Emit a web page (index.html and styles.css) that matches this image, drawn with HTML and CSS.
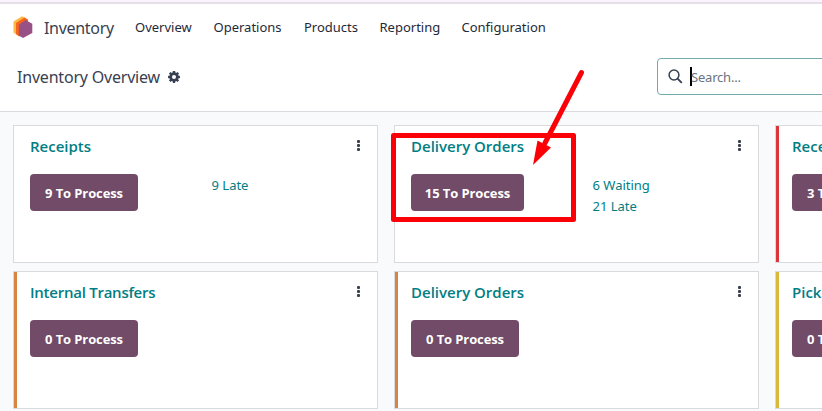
FILE: index.html
```html
<!DOCTYPE html>
<html lang="en">
<head>
<meta charset="utf-8">
<title>Inventory Overview</title>
<link rel="stylesheet" href="styles.css">
</head>
<body>
<div class="app">
  <header class="navbar">
    <svg class="logo" width="20" height="22" viewBox="0 0 20 22">
      <path fill="#fbb945" d="M.5 5.500 9 .3l4 2V14L4 19 .5 16.500z"/>
      <path fill="#f8641a" d="M3 7 11.500 1.500 15 3.500V15L6 20.500 3 18z"/>
      <path fill="#985184" d="M5.800 8.700 12.500 4 19.300 7.700V17L10 22l-4.200-2.500z"/>
    </svg>
    <span class="brand">Inventory</span>
    <nav class="menu">
      <a class="menu-overview">Overview</a>
      <a class="menu-operations">Operations</a>
      <a class="menu-products">Products</a>
      <a class="menu-reporting">Reporting</a>
      <a>Configuration</a>
    </nav>
  </header>
  <div class="control">
    <h1>Inventory Overview</h1>
    <svg class="gear" width="12" height="12" viewBox="0 0 12 12">
      <g fill="#374151">
        <rect x="4.800" y="0" width="2.400" height="12" rx=".4"/>
        <rect x="4.800" y="0" width="2.400" height="12" rx=".4" transform="rotate(45 6 6)"/>
        <rect x="4.800" y="0" width="2.400" height="12" rx=".4" transform="rotate(90 6 6)"/>
        <rect x="4.800" y="0" width="2.400" height="12" rx=".4" transform="rotate(135 6 6)"/>
        <circle cx="6" cy="6" r="4.700"/>
      </g>
      <circle cx="6" cy="6" r="2" fill="#fff"/>
    </svg>
    <div class="search">
      <svg width="15" height="15" viewBox="0 0 15 15" fill="none" stroke="#374151" stroke-width="1.500">
        <circle cx="6" cy="6" r="4.900"/><path stroke-width="1.900" d="m9.600 9.600 4.200 4.200"/>
      </svg>
      <span class="caret"></span>
      <span class="placeholder">Search...</span>
    </div>
  </div>
  <main class="board">
    <section class="card">
      <div class="card-head"><h2>Receipts</h2><i class="dots"><b></b><b></b><b></b></i></div>
      <div class="card-body"><div class="col"><button>9 To Process</button></div><div class="links"><a>9 Late</a></div></div>
    </section>
    <section class="card">
      <div class="card-head"><h2>Delivery Orders</h2><i class="dots"><b></b><b></b><b></b></i></div>
      <div class="card-body"><div class="col"><button class="wide">15 To Process</button></div><div class="links"><a>6 Waiting</a><a>21 Late</a></div></div>
    </section>
    <section class="card red">
      <div class="card-head"><h2>Receipts</h2></div>
      <div class="card-body"><div class="col"><button>3 To Process</button></div></div>
    </section>
    <section class="card orange">
      <div class="card-head"><h2 class="tight">Internal Transfers</h2><i class="dots"><b></b><b></b><b></b></i></div>
      <div class="card-body"><div class="col"><button>0 To Process</button></div></div>
    </section>
    <section class="card orange">
      <div class="card-head"><h2>Delivery Orders</h2><i class="dots"><b></b><b></b><b></b></i></div>
      <div class="card-body"><div class="col"><button>0 To Process</button></div></div>
    </section>
    <section class="card yellow">
      <div class="card-head"><h2>Pick</h2></div>
      <div class="card-body"><div class="col"><button>0 To Process</button></div></div>
    </section>
  </main>
  <svg class="callout" width="822" height="411" viewBox="0 0 822 411">
    <rect x="393.500" y="135.500" width="180" height="84" fill="none" stroke="#fb0007" stroke-width="5" stroke-linejoin="round"/>
    <path d="M581.500 72.500 545 143" stroke="#fb0007" stroke-width="5" stroke-linecap="round"/>
    <path d="M533 165 537.500 140.500 551 147.500z" fill="#fb0007"/>
  </svg>
</div>
</body>
</html>
```
FILE: styles.css
```css
* { box-sizing: border-box; }
body { margin: 0; font-family: "Noto Sans", sans-serif; font-size: 14px; color: #374151; background: #f9fafb; }
.app { position: relative; width: 822px; height: 411px; overflow: hidden; }
.navbar { display: flex; align-items: center; height: 52px; padding: 4px 0 3px 13px; background: linear-gradient(#fbf4fe 2px, #e5dfe9 2px, #e5dfe9 4px, #fff 4px); }
.logo { flex: none; }
.brand { width: 91px; margin-left: 11px; font-size: 16px; letter-spacing: -.3px; line-height: 22px; padding-top: 2px; }
.menu { display: flex; font-size: 13px; line-height: 20px; color: #1f2937; padding-top: 1px; }
.menu-overview { width: 78.500px; }
.menu-operations { width: 90.500px; }
.menu-products { width: 75.500px; }
.menu-reporting { width: 82px; }
.control { display: flex; align-items: center; height: 60px; padding: 0 0 10px 17px; background: #fff; border-bottom: 1px solid #d8dadd; }
h1 { flex: none; margin: 0; width: 151px; font-size: 16px; font-weight: 400; letter-spacing: -.2px; line-height: 22px; white-space: nowrap; }
.gear { flex: none; }
.search { display: flex; align-items: center; flex: none; width: 200px; height: 37px; margin: 0 0 0 477px; padding-left: 10px; border: 1px solid #71a9ac; border-radius: 4px; background: #fff; }
.caret { width: 2px; height: 19px; margin-left: 7px; background: #000; }
.placeholder { margin-left: -1px; font-size: 13px; letter-spacing: -.2px; color: #6b7280; }
.board { display: grid; grid-template-columns: repeat(3, 365px); grid-auto-rows: 138px; column-gap: 16px; row-gap: 8px; padding: 13px; }
.card { padding: 10px 16px 0; background: #fff; border: 1px solid #d8dadd; }
.red { box-shadow: inset 3px 0 #d9373b; }
.orange { box-shadow: inset 3px 0 #d58643; }
.yellow { box-shadow: inset 3px 0 #dbb83c; }
.card-head { display: flex; justify-content: space-between; height: 20px; }
h2 { margin: 0; font-family: "Open Sans", sans-serif; font-size: 15px; font-weight: 600; line-height: 20px; color: #017e84; white-space: nowrap; }
.tight { letter-spacing: -.25px; }
.dots { display: flex; flex-direction: column; gap: 1px; width: 3px; margin: 4px 1px 0 0; }
.dots b { width: 3px; height: 3px; border-radius: 1px; background: #374151; }
.card-body { display: flex; padding-top: 18px; }
.col { width: 181.500px; }
button { display: block; width: 108px; height: 37px; padding: 1px 0 0; border: 0; border-radius: 4px; background: #714b67; color: #fff; font: 700 13px/36px "Open Sans", sans-serif; letter-spacing: -.1px; white-space: nowrap; }
.wide { width: 113px; }
.links { display: flex; flex-direction: column; padding-top: 1px; font-size: 13px; line-height: 21px; color: #017e84; }
.callout { position: absolute; left: 0; top: 0; }
```
